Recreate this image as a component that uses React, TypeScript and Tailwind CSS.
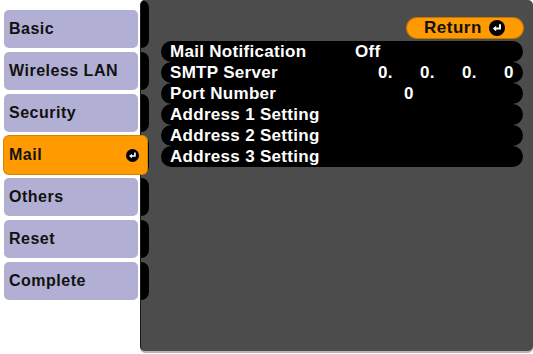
const font = { fontFamily: '"Liberation Sans", Arial, sans-serif' };

const tabs = ["Basic", "Wireless LAN", "Security", "Mail", "Others", "Reset", "Complete"];

const rows: { label: string; value?: string[]; pad?: string }[] = [
  { label: "Mail Notification", value: ["Off"], pad: "pl-0" },
  { label: "SMTP Server", value: ["0.", "0.", "0.", "0"], pad: "pl-[23px]" },
  { label: "Port Number", value: ["0"], pad: "pl-[49px]" },
  { label: "Address 1 Setting" },
  { label: "Address 2 Setting" },
  { label: "Address 3 Setting" },
];

const EnterIcon = ({ size }: { size: number }) => (
  <svg width={size} height={size} viewBox="0 0 16 16">
    <circle cx="8" cy="8" r="8" fill="#000" />
    <path d="M11 4.2V8.6H6.5" stroke="#fff" strokeWidth="2" fill="none" />
    <path d="M3.8 8.6L7.2 5.8V11.4Z" fill="#fff" />
  </svg>
);

export default function App() {
  return (
    <div className="flex h-[354px] w-[533px] bg-white" style={font}>
      {/* Left tabs */}
      <div className="flex w-[140px] shrink-0 flex-col gap-1 pl-1 pt-[10px]">
        {tabs.map((t) =>
          t === "Mail" ? (
            <div
              key={t}
              className="relative z-10 flex h-[38px] w-[143px] items-center justify-between rounded-[5px] bg-[#ff9a00] pl-[5px] pr-[8px] text-[16px] font-bold tracking-[0.5px] text-[#111] shadow-[0_0_0_1px_#d98200]"
            >
              <span>{t}</span>
              <EnterIcon size={13} />
            </div>
          ) : (
            <div
              key={t}
              className="flex h-[38px] w-[134px] items-center rounded-[5px] bg-[#b1afd3] pl-[5px] text-[16px] font-bold tracking-[0.5px] text-[#111]"
            >
              {t}
            </div>
          )
        )}
      </div>

      {/* Main panel */}
      <div className="flex h-[351px] min-w-0 flex-1 overflow-hidden rounded-[5px] border-l border-[#1a1a1a] bg-[#4c4c4c] shadow-[0_2px_0_#b5b5b5]">
        {/* tab end caps */}
        <div className="flex w-[8px] shrink-0 flex-col gap-1">
          <div className="h-[48px] rounded-r-[8px] bg-black" />
          {tabs.slice(1).map((t) => (
            <div key={t} className="h-[38px] rounded-r-[8px] bg-black" />
          ))}
        </div>

        <div className="flex min-w-0 flex-1 flex-col pl-[12px] pt-[18px]">
          <div className="mr-[10px] flex h-[20px] w-[116px] items-center self-end rounded-full bg-[#ff9a00] pl-[17px] text-[17px] font-bold tracking-[0.5px] text-[#111] shadow-[0_0_0_1px_#c87400]">
            <span>Return</span>
            <span className="ml-[7px]">
              <EnterIcon size={16} />
            </span>
          </div>

          <div className="mr-[10px] mt-[3px] flex flex-col">
            {rows.map((r) => (
              <div
                key={r.label}
                className="flex h-[21px] items-center rounded-full bg-black pl-[9px] text-[17px] font-bold leading-[21px] tracking-[0.3px] text-white"
              >
                <span className="w-[185px] shrink-0 whitespace-nowrap">{r.label}</span>
                {r.value && (
                  <span className={`flex ${r.pad}`}>
                    {r.value.map((v, i) => (
                      <span key={i} className={i < 3 && r.value!.length > 1 ? "w-[42px]" : ""}>
                        {v}
                      </span>
                    ))}
                  </span>
                )}
              </div>
            ))}
          </div>
        </div>
      </div>
    </div>
  );
}
